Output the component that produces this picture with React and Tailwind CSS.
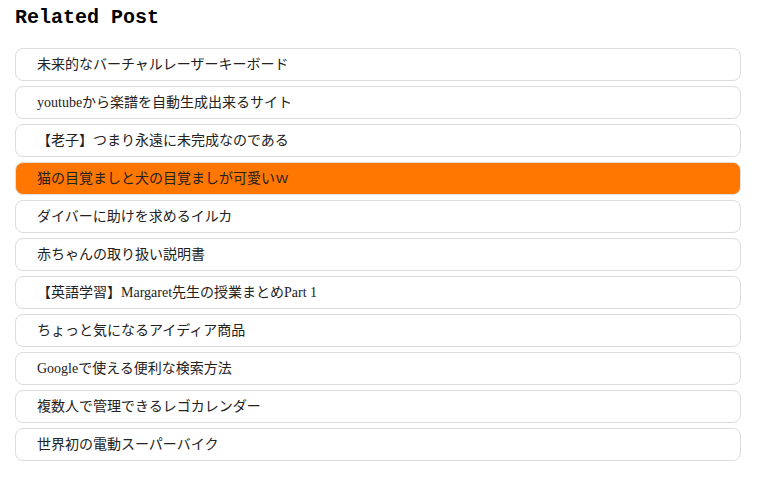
import React from "react";

const items = [
  "未来的なバーチャルレーザーキーボード",
  "youtubeから楽譜を自動生成出来るサイト",
  "【老子】つまり永遠に未完成なのである",
  "猫の目覚ましと犬の目覚ましが可愛いｗ",
  "ダイバーに助けを求めるイルカ",
  "赤ちゃんの取り扱い説明書",
  "【英語学習】Margaret先生の授業まとめPart 1",
  "ちょっと気になるアイディア商品",
  "Googleで使える便利な検索方法",
  "複数人で管理できるレゴカレンダー",
  "世界初の電動スーパーバイク",
];

export default function App() {
  return (
    <div className="w-[757px] h-[483px] bg-white pl-[15px] pr-[16px] pt-[6px]">
      <h2
        className="text-[20px] font-bold leading-[24px] text-black"
        style={{ fontFamily: '"Liberation Mono", "Courier New", monospace' }}
      >
        Related Post
      </h2>
      <ul className="mt-[18px] flex flex-col gap-[5px]">
        {items.map((t, i) => (
          <li
            key={i}
            className={
              i === 3
                ? "h-[33px] flex items-center pl-[21px] rounded-[8px] border border-[#e0e0e0] bg-[#ff7600] text-[14px] text-[#222]"
                : "h-[33px] flex items-center pl-[21px] rounded-[8px] border border-[#dcdcdc] bg-white text-[14px] text-[#222]"
            }
            style={{ fontFamily: '"Liberation Serif", "Noto Sans CJK JP", serif' }}
          >
            {t}
          </li>
        ))}
      </ul>
    </div>
  );
}
